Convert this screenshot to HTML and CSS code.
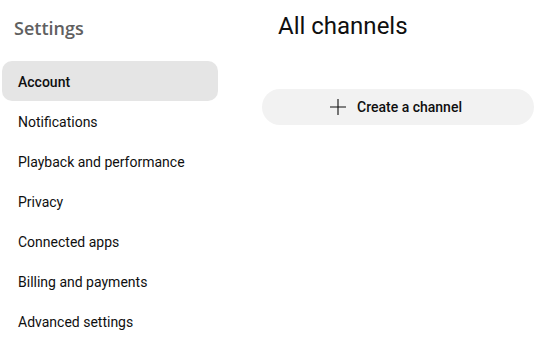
FILE: index.html
```html
<!DOCTYPE html>
<html lang="en">

<head>
    <meta charset="UTF-8">
    <meta name="viewport" content="width=device-width, initial-scale=1.0">
    <title>Settings</title>
    <link rel="stylesheet" href="styles.css">
</head>

<body>

    <div class="page">
        <!-- Menu di sebelah kiri -->
        <div class="sidebar">
            <h2 class="sidebar-title">Settings</h2>
            <div class="menu">
                <a class="menu-item active" href="#">Account</a>
                <a class="menu-item" href="#">Notifications</a>
                <a class="menu-item" href="#">Playback and performance</a>
                <a class="menu-item" href="#">Privacy</a>
                <a class="menu-item" href="#">Connected apps</a>
                <a class="menu-item" href="#">Billing and payments</a>
                <a class="menu-item" href="#">Advanced settings</a>
            </div>
        </div>

        <!-- Konten utama -->
        <div class="main">
            <h1 class="main-title">All channels</h1>
            <button class="btn-create">
                <svg width="16" height="16" viewBox="0 0 16 16">
                    <path d="M8 0v16M0 8h16" stroke="#0f0f0f" stroke-width="1.1" fill="none" />
                </svg>
                <span>Create a channel</span>
            </button>
        </div>
    </div>

</body>

</html>
```

FILE: styles.css
```css
body {
    margin: 0;
    padding: 0;
    background-color: #fff;
    font-family: Roboto, "Liberation Sans", Arial, sans-serif;
    color: #0f0f0f;
}

.page {
    display: flex;
}

/* Styling untuk Sidebar */
.sidebar {
    width: 216px;
    margin-left: 2px;
}

.sidebar-title {
    margin: 0;
    height: 56px;
    line-height: 56px;
    padding-left: 12px;
    font-family: "Open Sans", sans-serif;
    font-size: 18px;
    font-weight: 600;
    color: #606060;
}

.menu {
    display: flex;
    flex-direction: column;
    padding-top: 5px;
}

.menu-item {
    box-sizing: border-box;
    height: 40px;
    line-height: 40px;
    padding: 1px 0 0 16px;
    border-radius: 10px;
    font-size: 14px;
    color: #0f0f0f;
    text-decoration: none;
}

.menu-item.active {
    background-color: #e5e5e5;
    font-weight: 500;
}

/* Styling untuk Konten */
.main {
    margin-left: 44px;
    width: 272px;
}

.main-title {
    margin: 0;
    height: 52px;
    line-height: 52px;
    padding-left: 16px;
    font-size: 24px;
    font-weight: 400;
}

.btn-create {
    margin-top: 37px;
    width: 272px;
    height: 36px;
    border: none;
    border-radius: 18px;
    background-color: #f2f2f2;
    display: flex;
    align-items: center;
    justify-content: center;
    gap: 11px;
    padding: 0 4px 0 0;
    font-family: inherit;
    font-size: 14px;
    font-weight: 500;
    color: #0f0f0f;
    cursor: pointer;
}
```
